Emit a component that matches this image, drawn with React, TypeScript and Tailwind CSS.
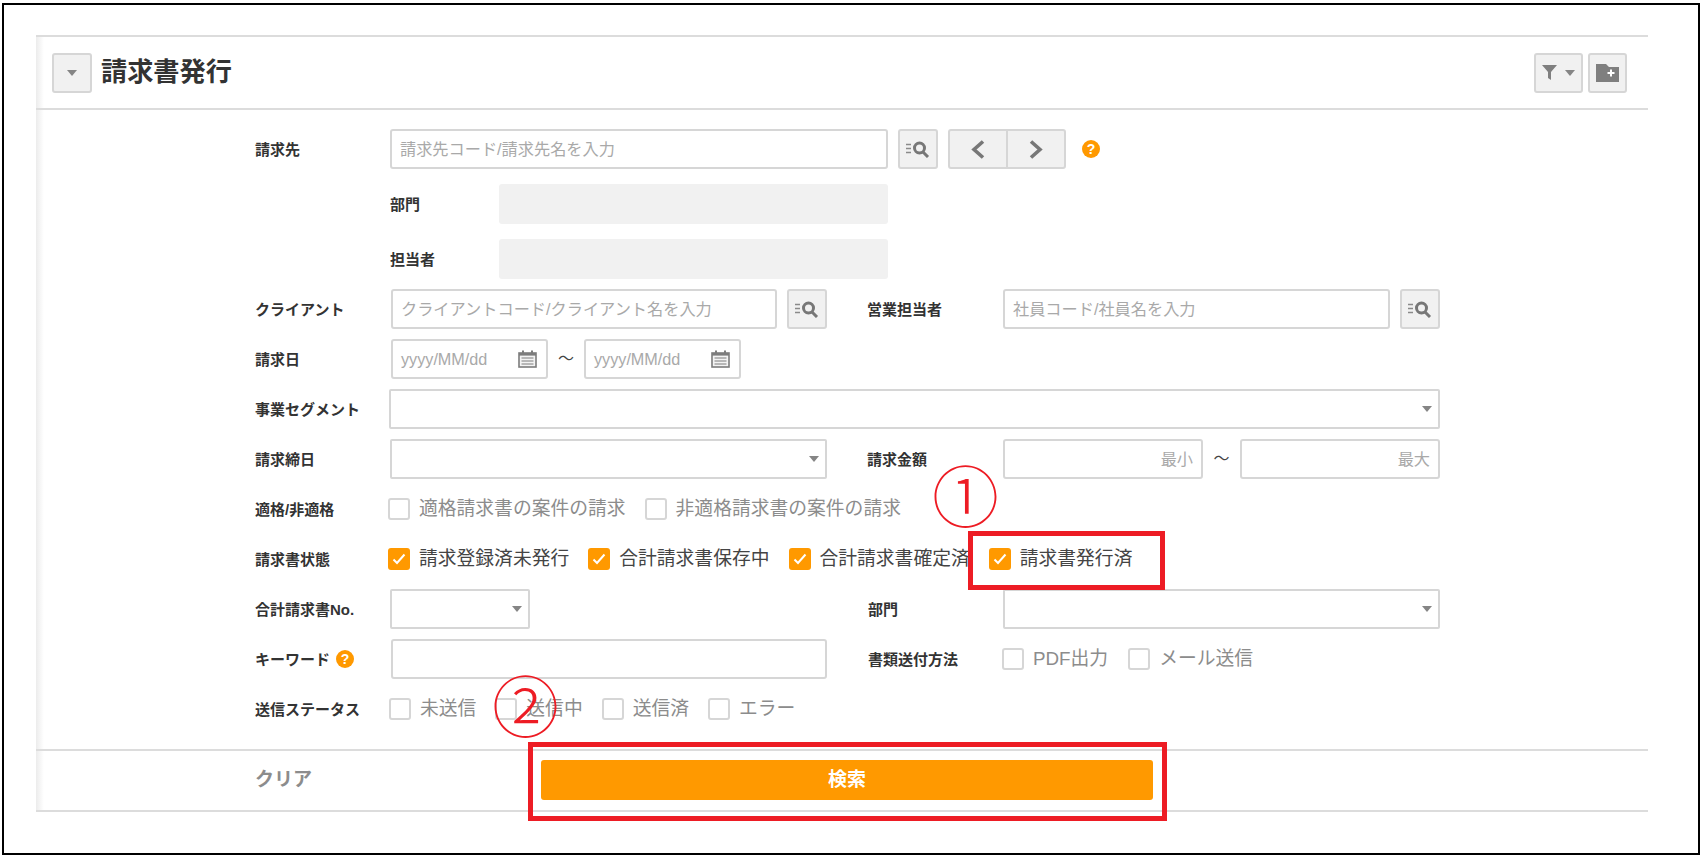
import React from "react";

const FONT = "font-['Liberation_Sans','Noto_Sans_CJK_JP',sans-serif]";
const BORDER = "border-2 border-[#d6d6d6]";

function Caret({ className = "" }: { className?: string }) {
  return (
    <svg width="10" height="6" viewBox="0 0 10 6" className={className}>
      <polygon points="0,0 10,0 5,6" fill="#858585" />
    </svg>
  );
}

function SearchIcon() {
  return (
    <svg width="24" height="17" viewBox="0 0 24 17" fill="none">
      <path d="M0 3.5H5M0 7.5H5M0 11.5H5" stroke="#8a8a8a" strokeWidth="1.4" />
      <circle cx="13.5" cy="7" r="5" stroke="#777" strokeWidth="3" />
      <path d="M17 11L22 16" stroke="#777" strokeWidth="3" />
    </svg>
  );
}

function SearchButton({ className = "" }: { className?: string }) {
  return (
    <div className={`flex h-10 w-10 shrink-0 items-center justify-center rounded-[3px] bg-[#f1f1f1] ${BORDER} ${className}`}>
      <SearchIcon />
    </div>
  );
}

function Help({ className = "" }: { className?: string }) {
  return (
    <span className={`flex h-[18px] w-[18px] shrink-0 items-center justify-center rounded-full bg-[#ff9900] text-[14px] leading-none font-bold text-white ${className}`}>
      ?
    </span>
  );
}

function Label({ children, className = "" }: { children: React.ReactNode; className?: string }) {
  return <div className={`shrink-0 text-[15px] leading-none font-bold text-[#333] ${className}`}>{children}</div>;
}

function Input({ placeholder = "", className = "", right = false }: { placeholder?: string; className?: string; right?: boolean }) {
  return (
    <div className={`flex h-10 shrink-0 items-center rounded-[3px] bg-white px-2 text-[16.2px] text-[#a9a9a9] ${BORDER} ${right ? "justify-end" : ""} ${className}`}>
      {placeholder}
    </div>
  );
}

function Select({ className = "" }: { className?: string }) {
  return (
    <div className={`flex h-10 shrink-0 items-center justify-end rounded-[2px] bg-white pr-[6px] ${BORDER} ${className}`}>
      <Caret />
    </div>
  );
}

function DateBox() {
  return (
    <div className={`flex h-10 w-[157px] shrink-0 items-center justify-between rounded-[3px] bg-white pr-[9px] pl-2 text-[16.2px] text-[#a9a9a9] ${BORDER}`}>
      <span>yyyy/MM/dd</span>
      <svg width="19" height="18" viewBox="0 0 19 18" fill="none">
        <rect x="1" y="3" width="17" height="14" fill="#f3f3f3" stroke="#7c7c7c" strokeWidth="1.6" />
        <rect x="1" y="3" width="17" height="2.6" fill="#7c7c7c" />
        <path d="M5 0.5V4M14 0.5V4" stroke="#7c7c7c" strokeWidth="2" />
        <path d="M3.5 8H15.5M3.5 11H15.5M3.5 14H15.5" stroke="#7c7c7c" strokeWidth="1" />
      </svg>
    </div>
  );
}

function Check({ label, checked = false, className = "" }: { label: string; checked?: boolean; className?: string }) {
  return (
    <div className={`flex shrink-0 items-center gap-[9px] ${className}`}>
      {checked ? (
        <span className="flex h-[22px] w-[22px] items-center justify-center rounded-[3px] bg-[#ff9900]">
          <svg width="14" height="12" viewBox="0 0 14 12" fill="none">
            <path d="M1.5 6.5L5 10L12.5 1.5" stroke="#fff" strokeWidth="2" />
          </svg>
        </span>
      ) : (
        <span className={`h-[22px] w-[22px] rounded-[3px] bg-white ${BORDER}`} />
      )}
      <span className={`text-[18.8px] leading-none ${checked ? "text-[#444]" : "text-[#8c8c8c]"}`}>{label}</span>
    </div>
  );
}

function Tilde({ className = "" }: { className?: string }) {
  return <div className={`shrink-0 text-center text-[16px] leading-none text-[#444] ${className}`}>～</div>;
}

function Row({ children, className = "mt-[10px]" }: { children: React.ReactNode; className?: string }) {
  return <div className={`flex h-10 items-center ${className}`}>{children}</div>;
}

export default function App() {
  return (
    <div className={`h-[858px] w-[1701px] overflow-hidden bg-white pt-[3px] pl-[2px] ${FONT}`}>
      <div className="relative h-[852px] w-[1698px] border-2 border-black pt-[30px] pl-[32px]">
        <div className="w-[1612px] border-t-2 border-[#dcdcdc] bg-[linear-gradient(to_right,#ececec,#ffffff_8px)]">
          {/* header */}
          <div className="flex h-[73px] items-center justify-between border-b-2 border-[#dcdcdc] pr-[21px] pl-4">
            <div className="flex items-center gap-[9px]">
              <div className={`flex h-10 w-10 items-center justify-center rounded-[3px] bg-[#f1f1f1] ${BORDER}`}>
                <Caret />
              </div>
              <h1 className="text-[26.2px] leading-none font-bold text-[#333]">請求書発行</h1>
            </div>
            <div className="flex items-center gap-[5px]">
              <div className={`flex h-10 w-[49px] items-center justify-center gap-2 rounded-[3px] bg-[#f1f1f1] ${BORDER}`}>
                <svg width="15" height="15" viewBox="0 0 15 15">
                  <polygon points="0,0 15,0 9,7 9,15 6,13 6,7" fill="#7f7f7f" />
                </svg>
                <Caret />
              </div>
              <div className={`flex h-10 w-[39px] items-center justify-center rounded-[3px] bg-[#f1f1f1] ${BORDER}`}>
                <svg width="23" height="18" viewBox="0 0 23 18">
                  <path d="M0 0H10L13 3H23V18H0Z" fill="#7f7f7f" />
                  <path d="M11.5 9H18.5M15 5.5V12.5" stroke="#fff" strokeWidth="2" />
                </svg>
              </div>
            </div>
          </div>

          {/* form */}
          <div className="pt-[19px] pb-[20px] pl-[219px]">
            <Row className="">
              <Label className="w-[135px]">請求先</Label>
              <Input className="w-[498px]" placeholder="請求先コード/請求先名を入力" />
              <SearchButton className="ml-[10px]" />
              <div className={`ml-[10px] flex h-10 w-[118px] rounded-[3px] bg-[#f1f1f1] ${BORDER}`}>
                <div className="flex flex-1 items-center justify-center border-r-2 border-[#d6d6d6]">
                  <svg width="14" height="19" viewBox="0 0 14 19" fill="none">
                    <path d="M12 1.5L3 9.5L12 17.5" stroke="#777" strokeWidth="3.6" />
                  </svg>
                </div>
                <div className="flex flex-1 items-center justify-center">
                  <svg width="14" height="19" viewBox="0 0 14 19" fill="none">
                    <path d="M2 1.5L11 9.5L2 17.5" stroke="#777" strokeWidth="3.6" />
                  </svg>
                </div>
              </div>
              <Help className="ml-[16px]" />
            </Row>
            <Row className="mt-[15px]">
              <Label className="ml-[135px] w-[109px]">部門</Label>
              <div className="h-10 w-[389px] rounded-[3px] bg-[#f1f1f1]" />
            </Row>
            <Row className="mt-[15px]">
              <Label className="ml-[135px] w-[109px]">担当者</Label>
              <div className="h-10 w-[389px] rounded-[3px] bg-[#f1f1f1]" />
            </Row>
            <Row>
              <Label className="w-[136px]">クライアント</Label>
              <Input className="w-[386px]" placeholder="クライアントコード/クライアント名を入力" />
              <SearchButton className="ml-[10px]" />
              <Label className="ml-[40px] w-[136px]">営業担当者</Label>
              <Input className="w-[387px]" placeholder="社員コード/社員名を入力" />
              <SearchButton className="ml-[10px]" />
            </Row>
            <Row>
              <Label className="w-[136px]">請求日</Label>
              <DateBox />
              <Tilde className="w-[36px]" />
              <DateBox />
            </Row>
            <Row>
              <Label className="w-[134px]">事業セグメント</Label>
              <Select className="w-[1051px]" />
            </Row>
            <Row>
              <Label className="w-[135px]">請求締日</Label>
              <Select className="w-[437px]" />
              <Label className="ml-[40px] w-[136px]">請求金額</Label>
              <Input className="w-[200px]" placeholder="最小" right />
              <Tilde className="w-[37px]" />
              <Input className="w-[200px]" placeholder="最大" right />
            </Row>
            <Row>
              <Label className="w-[133px]">適格/非適格</Label>
              <div className="flex gap-[19px]">
                <Check label="適格請求書の案件の請求" />
                <Check label="非適格請求書の案件の請求" />
              </div>
            </Row>
            <Row>
              <Label className="w-[133px]">請求書状態</Label>
              <div className="flex gap-[19px]">
                <Check checked label="請求登録済未発行" />
                <Check checked label="合計請求書保存中" />
                <Check checked label="合計請求書確定済" />
                <Check checked label="請求書発行済" />
              </div>
            </Row>
            <Row>
              <Label className="w-[135px]">合計請求書No.</Label>
              <Select className="w-[140px]" />
              <Label className="ml-[338px] w-[135px]">部門</Label>
              <Select className="w-[437px]" />
            </Row>
            <Row>
              <Label className="flex w-[136px] items-center gap-[6px]">
                キーワード
                <Help />
              </Label>
              <Input className="w-[436px]" />
              <Label className="ml-[41px] w-[134px]">書類送付方法</Label>
              <div className="flex gap-5">
                <Check label="PDF出力" />
                <Check label="メール送信" />
              </div>
            </Row>
            <Row>
              <Label className="w-[134px]">送信ステータス</Label>
              <div className="flex gap-[19px]">
                <Check label="未送信" />
                <Check label="送信中" />
                <Check label="送信済" />
                <Check label="エラー" />
              </div>
            </Row>
          </div>

          {/* footer */}
          <div className="flex h-[63px] items-start border-y-2 border-[#dcdcdc] pt-[9px] pl-[219px]">
            <div className="flex h-10 w-[286px] shrink-0 items-center text-[19px] font-bold text-[#8c8c8c]">クリア</div>
            <div className="flex h-10 w-[612px] items-center justify-center rounded-[3px] bg-[#ff9900] text-[19px] font-bold text-white">
              検索
            </div>
          </div>
        </div>

        {/* annotations */}
        <div className="absolute top-[526px] left-[964px] h-[59px] w-[197px] border-[5px] border-[#ed1c24]" />
        <div className="absolute top-[737px] left-[524px] h-[79px] w-[639px] border-[5px] border-[#ed1c24]" />
        <div className="absolute top-[463px] left-[931px] flex h-[61px] w-[61px] items-center justify-center text-[67px] leading-none font-extralight text-[#ed1c24]">①</div>
        <div className="absolute top-[673px] left-[491px] flex h-[61px] w-[61px] items-center justify-center text-[67px] leading-none font-extralight text-[#ed1c24]">②</div>
      </div>
    </div>
  );
}
